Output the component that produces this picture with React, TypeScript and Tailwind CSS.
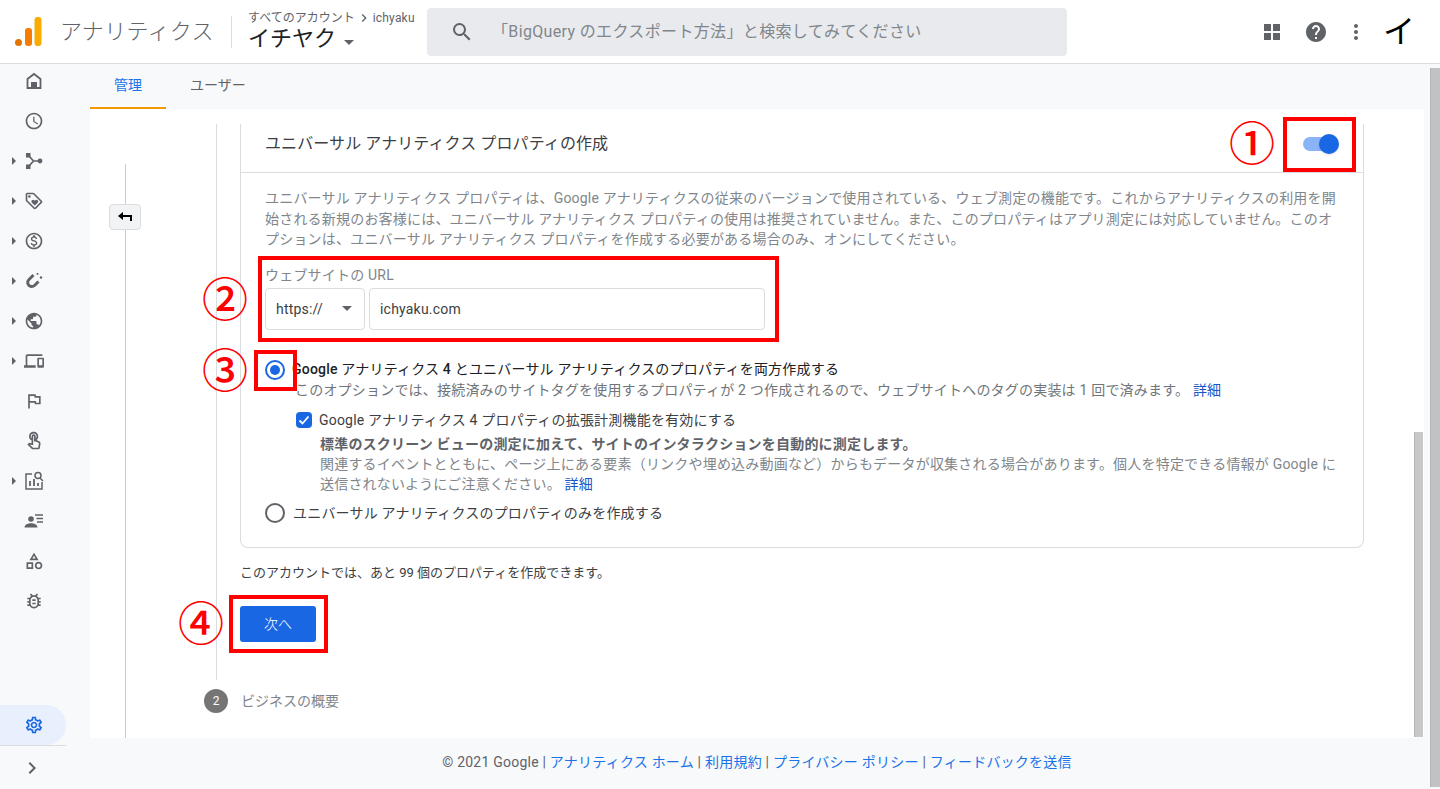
import React from "react";
import {
  MdOutlineAccessTime, MdOutlineMonetizationOn, MdPublic, MdOutlineDevices, MdOutlineFlag, MdOutlineTouchApp,
  MdOutlineCategory, MdOutlineBugReport, MdOutlineSettings, MdChevronRight, MdHelp, MdMoreVert, MdSearch, MdOutlineLoyalty,
} from "react-icons/md";

const Home = () => (
  <svg viewBox="0 0 20 20" className="w-5 h-5" fill="none" stroke="currentColor" strokeWidth="1.800">
    <path d="M3.500 17V8L10 3l6.500 5v9z" />
    <rect x="7" y="11" width="6" height="6" fill="currentColor" stroke="none" />
  </svg>
);
const Fork = () => (
  <svg viewBox="0 0 20 20" className="w-5 h-5" fill="currentColor">
    <rect x="2" y="2" width="4.500" height="4.500" />
    <rect x="2" y="13.500" width="4.500" height="4.500" />
    <circle cx="16" cy="10" r="2.400" />
    <path d="M5 5l4.500 5L5 15M9.500 10H15" fill="none" stroke="currentColor" strokeWidth="1.700" />
  </svg>
);
const Magnet = () => (
  <svg viewBox="0 0 20 20" className="w-5 h-5" fill="none" stroke="currentColor">
    <path d="M9.500 4L5 8.500a3.700 3.700 0 0 0 5.500 6L14.500 10.500" strokeWidth="3" />
    <circle cx="13.500" cy="3" r="1" fill="currentColor" stroke="none" />
    <circle cx="17" cy="6.500" r="1.200" fill="currentColor" stroke="none" />
  </svg>
);
const Report = () => (
  <svg viewBox="0 0 20 20" className="w-5 h-5" fill="none" stroke="currentColor" strokeWidth="1.500">
    <path d="M8 3H2v15h16v-7" />
    <path d="M6 15v-5M10 15V8M14 15v-3" strokeWidth="1.800" />
    <circle cx="14" cy="4.500" r="3" />
    <path d="M16 7l3 3" />
  </svg>
);
const People = () => (
  <svg viewBox="0 0 20 20" className="w-5 h-5" fill="currentColor">
    <circle cx="7" cy="8" r="2.800" />
    <path d="M0.500 16.500c0-3 4-4.300 6.500-4.300s6.500 1.300 6.500 4.300z" />
    <path d="M11 4h8M12.500 7.500H19M13 11h6" stroke="currentColor" strokeWidth="1.500" />
  </svg>
);
const Apps = () => (
  <svg viewBox="0 0 16 16" className="w-4 h-4" fill="#5f6368">
    <rect width="7" height="7" /><rect x="9" width="7" height="7" />
    <rect y="9" width="7" height="7" /><rect x="9" y="9" width="7" height="7" />
  </svg>
);
const Caret = ({ cls }: { cls: string }) => <span className={`block w-0 h-0 border-x-[5.500px] border-x-transparent border-t-[5px] ${cls}`} />;
const Tri = () => <span className="block w-0 h-0 border-y-[4px] border-y-transparent border-l-[4px] border-l-[#5f6368]" />;

const icons: [React.ReactNode, boolean][] = [
  [<Home />, false],
  [<MdOutlineAccessTime size={20} />, false],
  [<Fork />, true],
  [<MdOutlineLoyalty size={20} />, true],
  [<MdOutlineMonetizationOn size={20} />, true],
  [<Magnet />, true],
  [<MdPublic size={20} />, true],
  [<MdOutlineDevices size={20} />, true],
  [<MdOutlineFlag size={20} />, false],
  [<MdOutlineTouchApp size={20} />, false],
  [<Report />, true],
  [<People />, false],
  [<MdOutlineCategory size={20} />, false],
  [<MdOutlineBugReport size={20} />, false],
];

const Box = ({ cls }: { cls: string }) => <div className={`absolute border-4 border-[#ff0000] pointer-events-none ${cls}`} />;
const Num = ({ cls, t }: { cls: string; t: string }) => (
  <div className={`absolute w-[46px] h-[46px] flex items-center justify-center text-[46px] leading-none text-[#ff0000] font-medium ${cls}`}>{t}</div>
);
const A = ({ children }: { children: React.ReactNode }) => <a className="text-[#1a56c8]">{children}</a>;
const L = ({ children }: { children: React.ReactNode }) => <span className="text-[#1a73e8]">{children}</span>;

export default function App() {
  return (
    <div
      className="relative w-[1440px] h-[789px] overflow-hidden bg-[#f8f9fb] flex flex-col text-[#3c4043]"
      style={{ fontFamily: 'Roboto, "Noto Sans CJK JP", sans-serif' }}
    >
      <header className="h-16 shrink-0 bg-white border-b border-[#dadce0] flex items-center">
        <svg viewBox="0 0 30 32" className="ml-[14px] w-[30px] h-[32px]">
          <circle cx="4.500" cy="26.500" r="3.500" fill="#e37400" />
          <rect x="11" y="12" width="7" height="18" rx="3" fill="#f57c00" />
          <rect x="20.500" y="1" width="7" height="29" rx="3" fill="#f9ab00" />
        </svg>
        <span className="ml-4 w-[154px] text-[22px] tracking-[0.300px] font-light text-[#5f6368] whitespace-nowrap">アナリティクス</span>
        <span className="ml-[17px] w-px h-8 bg-[#dadce0]" />
        <div className="ml-4 w-[179px] flex flex-col">
          <div className="flex items-center text-xs leading-[14px] text-[#5f6368] whitespace-nowrap">
            すべてのアカウント
            <MdChevronRight size={16} className="mx-[1px]" />
            <span className="tracking-[0.200px]">ichyaku</span>
          </div>
          <div className="-mt-[1px] flex items-center text-[22px] leading-[28px] text-[#202124]">
            イチヤク
            <Caret cls="ml-2 mt-[6px] border-t-[#5f6368]" />
          </div>
        </div>
        <div className="w-[640px] h-12 rounded bg-[#e8eaed] flex items-center pl-[23px]">
          <MdSearch size={24} className="text-[#5f6368]" />
          <span className="ml-[18px] text-base tracking-[0.350px] text-[#80868b]">「BigQuery のエクスポート方法」と検索してみてください</span>
        </div>
        <div className="ml-[197px] flex items-center">
          <Apps />
          <MdHelp size={24} className="ml-6 text-[#5f6368]" />
          <MdMoreVert size={24} className="ml-4 text-[#5f6368]" />
          <span className="ml-[15px] text-[32px] leading-none text-black">イ</span>
        </div>
      </header>

      <div className="flex flex-1 min-h-0">
        <aside className="w-[90px] shrink-0 flex flex-col text-[#5f6368]">
          <nav className="flex flex-col gap-5 pt-[7px]">
            {icons.map(([ic, tri], i) => (
              <div key={i} className="h-5 flex items-center pl-3">
                <span className="w-3 flex">{tri && <Tri />}</span>
                {ic}
              </div>
            ))}
          </nav>
          <div className="mt-auto w-[66px] h-10 rounded-r-[20px] bg-[#e8f0fe] flex items-center pl-6 text-[#1a67e3]">
            <MdOutlineSettings size={20} />
          </div>
          <div className="w-[66px] h-[44px] border-t border-[#dadce0] flex items-center pl-[20px]">
            <MdChevronRight size={24} />
          </div>
        </aside>

        <main className="flex-1 min-w-0 flex flex-col">
          <div className="h-[45px] shrink-0 flex text-sm">
            <div className="w-[76px] pb-[2px] border-b-2 border-[#f29900] text-[#1a73e8] flex items-center justify-center">管理</div>
            <div className="ml-6 pb-1 flex items-center text-[#5f6368]">ユーザー</div>
          </div>

          <div className="w-[1334px] h-[629px] shrink-0 bg-white flex">
            <div className="w-[70px] shrink-0 pt-[55px] flex flex-col items-center">
              <div className="w-px h-10 bg-[#c8cacd]" />
              <div className="w-8 h-[26px] bg-[#f1f3f4] border border-[#dadce0] rounded-sm flex items-center justify-center">
                <svg viewBox="0 0 14 10" className="w-[14px] h-[10px]" fill="black">
                  <path d="M0 4l5-4v3h9v6h-2V5H5v3z" />
                </svg>
              </div>
              <div className="w-px flex-1 bg-[#c8cacd]" />
            </div>

            <div className="ml-[44px] pt-[15px] flex flex-col">
              <div className="flex h-[556px]">
                <div className="w-6 shrink-0 flex justify-center"><div className="w-px bg-[#dadce0]" /></div>
                <div className="ml-3 w-[1124px] flex flex-col">
                  <section className="h-[424px] border-x border-b border-[#dadce0] rounded-b-lg flex flex-col tracking-[0.200px]">
                    <div className="h-[49px] shrink-0 pb-2 border-b border-[#dadce0] flex items-center justify-between pl-6 pr-[28px]">
                      <span className="text-base tracking-[0.100px]">ユニバーサル アナリティクス プロパティの作成</span>
                      <div className="relative w-8 h-[14px] rounded-full bg-[#8ab4f8]">
                        <span className="absolute -right-1 -top-[3px] w-5 h-5 rounded-full bg-[#1a67e3] shadow" />
                      </div>
                    </div>
                    <div className="pl-6 pt-[15px] flex flex-col">
                      <p className="text-sm leading-[20.500px] text-[#80868b] whitespace-nowrap">
                        ユニバーサル アナリティクス プロパティは、Google アナリティクスの従来のバージョンで使用されている、ウェブ測定の機能です。これからアナリティクスの利用を開<br />
                        始される新規のお客様には、ユニバーサル アナリティクス プロパティの使用は推奨されていません。また、このプロパティはアプリ測定には対応していません。このオ<br />
                        プションは、ユニバーサル アナリティクス プロパティを作成する必要がある場合のみ、オンにしてください。
                      </p>
                      <label className="mt-[16px] text-sm leading-[18px] text-[#80868b]">ウェブサイトの URL</label>
                      <div className="mt-[4px] flex gap-1 text-sm text-[#3c4043]">
                        <div className="w-[100px] h-[42px] border border-[#dadce0] rounded flex items-center justify-between pl-[10px] pr-3">
                          https://
                          <Caret cls="border-t-[#5f6368]" />
                        </div>
                        <div className="w-[396px] h-[42px] border border-[#dadce0] rounded flex items-center pl-[10px]">ichyaku.com</div>
                      </div>
                      <div className="mt-[29px] flex items-start">
                        <span className="mt-[1px] w-5 h-5 rounded-full border-2 border-[#1a67e3] flex items-center justify-center">
                          <span className="w-[10px] h-[10px] rounded-full bg-[#1a67e3]" />
                        </span>
                        <div className="ml-[7px] flex flex-col">
                          <span className="text-sm leading-5 text-[#202124]"><span className="font-medium">Google</span> アナリティクス <span className="font-medium">4</span> とユニバーサル アナリティクスのプロパティを両方作成する</span>
                          <span className="ml-[3px] mt-[1px] text-sm leading-5 text-[#70757a]">このオプションでは、接続済みのサイトタグを使用するプロパティが 2 つ作成されるので、ウェブサイトへのタグの実装は 1 回で済みます。 <A>詳細</A></span>
                        </div>
                      </div>
                      <div className="ml-[31px] mt-[10px] flex items-start">
                        <span className="mt-[2px] w-4 h-4 rounded-sm bg-[#1a67e3] flex items-center justify-center">
                          <svg viewBox="0 0 16 16" className="w-4 h-4" fill="none" stroke="white" strokeWidth="1.800"><path d="M3.500 8.500l3 3 6-7" /></svg>
                        </span>
                        <div className="ml-[7px] flex flex-col text-sm leading-5">
                          <span className="text-[#3c4043]">Google アナリティクス 4 プロパティの拡張計測機能を有効にする</span>
                          <span className="ml-[1px] mt-[4px] font-bold text-[#5f6368]">標準のスクリーン ビューの測定に加えて、サイトのインタラクションを自動的に測定します。</span>
                          <span className="ml-[1px] text-[#80868b] whitespace-nowrap">
                            関連するイベントとともに、ページ上にある要素（リンクや埋め込み動画など）からもデータが収集される場合があります。個人を特定できる情報が Google に<br />
                            送信されないようにご注意ください。 <A>詳細</A>
                          </span>
                        </div>
                      </div>
                      <div className="mt-[9px] flex items-center">
                        <span className="w-5 h-5 rounded-full border-2 border-[#5f6368]" />
                        <span className="ml-[8px] text-sm leading-5">ユニバーサル アナリティクスのプロパティのみを作成する</span>
                      </div>
                    </div>
                  </section>
                  <p className="mt-[16px] text-[13px] leading-[18px] text-[#3c4043]">このアカウントでは、あと 99 個のプロパティを作成できます。</p>
                  <button className="mt-[24px] w-[76px] h-9 rounded-[3px] bg-[#1a67e3] text-white text-sm font-light flex items-center justify-center">次へ</button>
                </div>
              </div>
              <div className="mt-[9px] flex items-center">
                <span className="w-6 h-6 rounded-full bg-[#757575] text-white text-xs flex items-center justify-center">2</span>
                <span className="ml-[13px] text-sm text-[#80868b]">ビジネスの概要</span>
              </div>
            </div>
          </div>

          <footer className="flex-1 w-[1334px] flex items-center justify-center pb-[3px] text-sm tracking-[0.230px] text-[#5f6368]">
            © 2021 Google |&nbsp;<L>アナリティクス ホーム</L>&nbsp;|&nbsp;<L>利用規約</L>&nbsp;|&nbsp;<L>プライバシー ポリシー</L>&nbsp;|&nbsp;<L>フィードバックを送信</L>
          </footer>
        </main>
      </div>

      <div className="absolute left-[1414px] top-[432px] w-[9px] h-[305px] bg-[#c8c8c8] border-l border-[#b4b4b4]" />
      <div className="absolute left-[1430px] top-[68px] w-[10px] h-[719px] bg-[#c1c2c5] border-l border-[#b4b4b4]" />

      <Box cls="left-[1283px] top-[117px] w-[73px] h-[55px]" />
      <Box cls="left-[258px] top-[256px] w-[521px] h-[86px]" />
      <Box cls="left-[254px] top-[350px] w-[43px] h-[41px]" />
      <Box cls="left-[229px] top-[595px] w-[99px] h-[58px]" />
      <Num cls="left-[1229px] top-[121px]" t="①" />
      <Num cls="left-[202px] top-[277px]" t="②" />
      <Num cls="left-[202px] top-[348px]" t="③" />
      <Num cls="left-[178px] top-[601px]" t="④" />
    </div>
  );
}
